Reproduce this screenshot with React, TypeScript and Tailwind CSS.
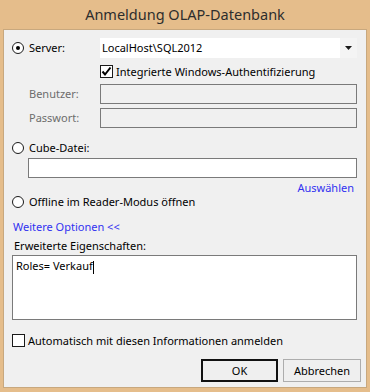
import React from "react";

const font = { fontFamily: '"Noto Sans", "Open Sans", Arial, sans-serif' };

function Radio({ checked }: { checked?: boolean }) {
  return (
    <span className="w-[12px] h-[12px] rounded-full border border-[#1a1a1a] bg-white flex items-center justify-center shrink-0">
      {checked && <span className="w-[4px] h-[4px] rounded-full bg-black" />}
    </span>
  );
}

function Check({ checked }: { checked?: boolean }) {
  return (
    <span className="w-[13px] h-[13px] border border-[#1a1a1a] bg-white flex items-center justify-center shrink-0">
      {checked && (
        <svg width="11" height="11" viewBox="0 0 11 11">
          <path d="M1.5 5.5 L4 8.5 L9.5 1.5" stroke="#000" strokeWidth="2" fill="none" />
        </svg>
      )}
    </span>
  );
}

export default function App() {
  return (
    <div
      className="w-[370px] h-[392px] bg-[#e5bd8b] flex flex-col text-[11px] leading-[14px] text-black"
      style={font}
    >
      <div className="h-[29px] flex items-center justify-center text-[14.5px] text-[#2d2d2d] pb-[1px]">
        Anmeldung OLAP-Datenbank
      </div>
      <div className="flex-1 mx-[3px] mb-[4px] border border-[#c8a87e] bg-[#f0f0f0] flex flex-col pl-[8px] pr-[9px] pt-[8px]">
        {/* Server row */}
        <div className="flex items-center h-[20px]">
          <div className="w-[88px] flex items-center gap-[5px] shrink-0">
            <Radio checked />
            <span>Server:</span>
          </div>
          <div className="flex-1 h-[20px] bg-white flex items-center">
            <span className="flex-1 pl-[2px]">LocalHost\SQL2012</span>
            <span className="w-[17px] h-[20px] bg-[#f4f4f4] flex items-center justify-center">
              <svg width="7" height="4" viewBox="0 0 7 4">
                <path d="M0 0 H7 L3.5 4 Z" fill="#1a1a1a" />
              </svg>
            </span>
          </div>
        </div>
        {/* Integrated auth */}
        <div className="flex items-center h-[13px] mt-[7px] pl-[88px] gap-[3px]">
          <Check checked />
          <span>Integrierte Windows-Authentifizierung</span>
        </div>
        {/* Benutzer */}
        <div className="flex items-center h-[20px] mt-[6px]">
          <span className="w-[88px] pl-[17px] text-[#6d6d6d] shrink-0">Benutzer:</span>
          <div className="flex-1 h-[20px] border border-[#7a7a7a] bg-[#f0f0f0]" />
        </div>
        <div className="flex items-center h-[20px] mt-[4px]">
          <span className="w-[88px] pl-[17px] text-[#6d6d6d] shrink-0">Passwort:</span>
          <div className="flex-1 h-[20px] border border-[#7a7a7a] bg-[#f0f0f0]" />
        </div>
        {/* Cube */}
        <div className="flex items-center h-[14px] mt-[13px] gap-[5px]">
          <Radio />
          <span>Cube-Datei:</span>
        </div>
        <div className="h-[20px] mt-[3px] ml-[16px] border border-[#7a7a7a] bg-white" />
        <div className="flex justify-end h-[14px] mt-[3px] pr-[3px]">
          <span className="text-[#3232f0]">Auswählen</span>
        </div>
        <div className="flex items-center h-[14px] gap-[5px]">
          <Radio />
          <span>Offline im Reader-Modus öffnen</span>
        </div>
        <div className="h-[14px] mt-[11px] ml-[1px] text-[#3232f0]">Weitere Optionen &lt;&lt;</div>
        <div className="h-[14px] mt-[5px] ml-[2px]">Erweiterte Eigenschaften:</div>
        <div className="h-[65px] mt-[2px] border border-[#7a7a7a] bg-white px-[3px] pt-[3px]">
          <span>Roles= Verkauf</span>
          <span className="inline-block w-[1px] h-[13px] bg-black align-middle" />
        </div>
        <div className="flex items-center h-[13px] mt-[14px] gap-[3px]">
          <Check />
          <span>Automatisch mit diesen Informationen anmelden</span>
        </div>
        <div className="flex justify-end mt-[12px] -mr-[4px] gap-[5px]">
          <div className="w-[77px] h-[23px] border-2 border-[#111] bg-[#efefef] flex items-center justify-center">
            OK
          </div>
          <div className="w-[78px] h-[23px] border border-[#adadad] bg-[#efefef] flex items-center justify-center">
            Abbrechen
          </div>
        </div>
      </div>
    </div>
  );
}
